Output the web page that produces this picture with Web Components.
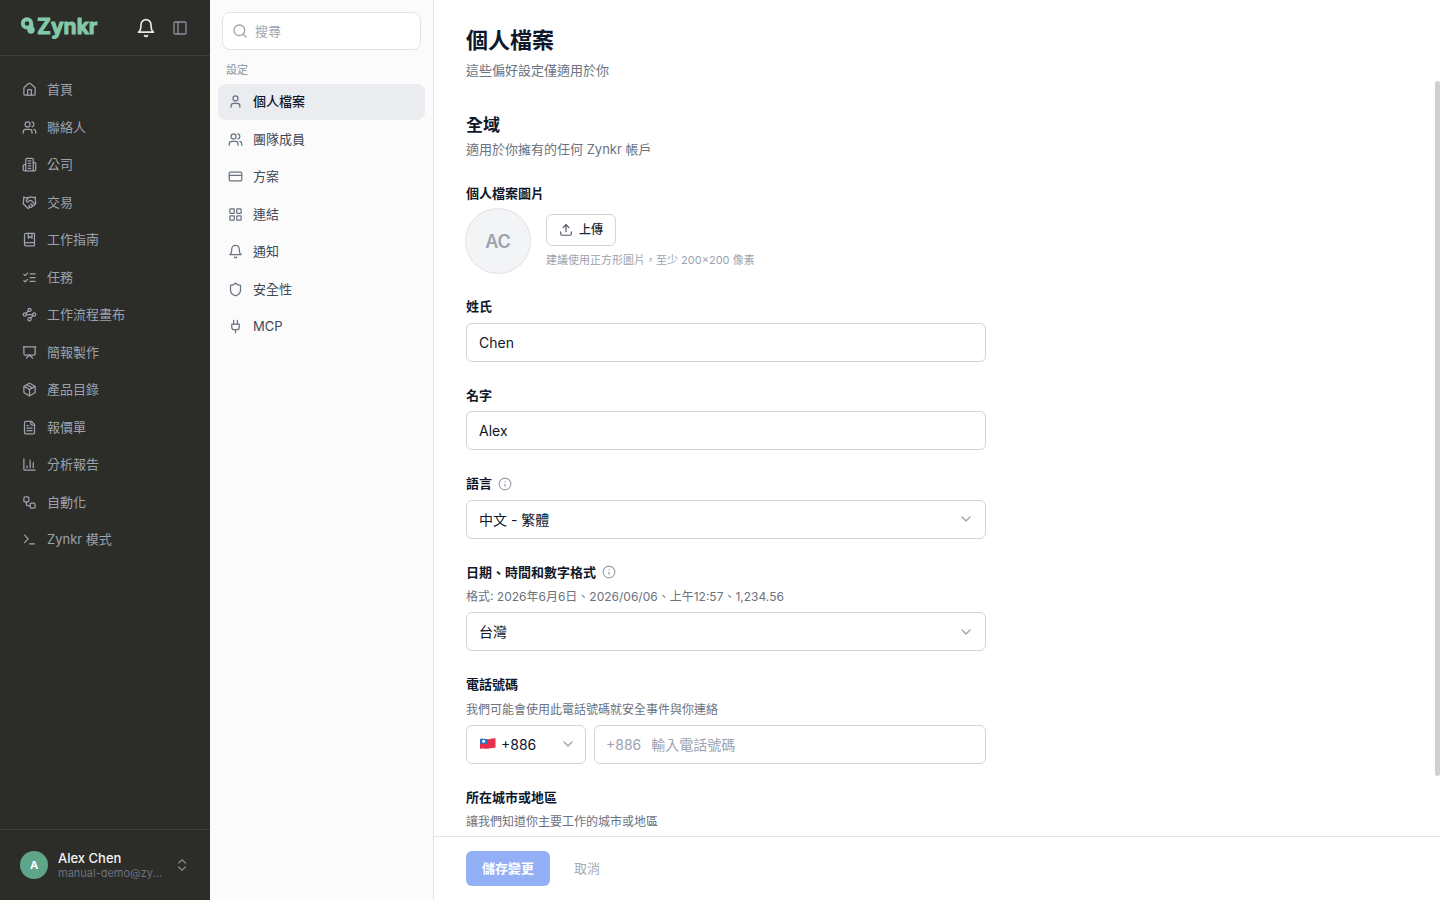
<!DOCTYPE html>
<html lang="zh-Hant">
<head>
<meta charset="utf-8">
<meta name="viewport" content="width=device-width, initial-scale=1">
<title>Zynkr</title>
<style>
html, body {
  height: 100%;
  margin: 0;
}
body {
  font-family: Inter, "Noto Sans CJK TC", sans-serif;
  font-size: 13px;
  line-height: 1.5;
  color: #0f172a;
  background: #fff;
  --ink: #0f172a;
  --muted: #6b7280;
  --faint: #9ca3af;
  --line: #e2e3e7;
  --field-line: #d0d2dc;
}
</style>
</head>
<body>
<app-shell>
  <main-sidebar slot="sidebar">
    <nav-item icon="home">首頁</nav-item>
    <nav-item icon="users">聯絡人</nav-item>
    <nav-item icon="building">公司</nav-item>
    <nav-item icon="handshake">交易</nav-item>
    <nav-item icon="book">工作指南</nav-item>
    <nav-item icon="checks">任務</nav-item>
    <nav-item icon="waypoints">工作流程畫布</nav-item>
    <nav-item icon="presentation">簡報製作</nav-item>
    <nav-item icon="package">產品目錄</nav-item>
    <nav-item icon="file">報價單</nav-item>
    <nav-item icon="chart">分析報告</nav-item>
    <nav-item icon="workflow">自動化</nav-item>
    <nav-item icon="terminal">Zynkr 模式</nav-item>
    <user-menu slot="user" name="Alex Chen" email="manual-demo@zy..."></user-menu>
  </main-sidebar>

  <settings-sidebar slot="settings" heading="設定">
    <nav-item icon="user" active>個人檔案</nav-item>
    <nav-item icon="users">團隊成員</nav-item>
    <nav-item icon="card">方案</nav-item>
    <nav-item icon="grid">連結</nav-item>
    <nav-item icon="bell">通知</nav-item>
    <nav-item icon="shield">安全性</nav-item>
    <nav-item icon="plug">MCP</nav-item>
  </settings-sidebar>

  <settings-page heading="個人檔案" subtitle="這些偏好設定僅適用於你">
    <form-section heading="全域" subtitle="適用於你擁有的任何 Zynkr 帳戶">
      <avatar-field label="個人檔案圖片" initials="AC" hint="建議使用正方形圖片，至少 200×200 像素">上傳</avatar-field>
      <text-field label="姓氏" value="Chen"></text-field>
      <text-field label="名字" value="Alex"></text-field>
      <select-field label="語言" info="語言說明" options="中文 - 繁體"></select-field>
      <select-field label="日期、時間和數字格式" info="格式說明" options="台灣"
        hint="格式: 2026年6月6日、2026/06/06、上午12:57、1,234.56"></select-field>
      <phone-field label="電話號碼" hint="我們可能會使用此電話號碼就安全事件與你連絡" code="+886" placeholder="輸入電話號碼"></phone-field>
      <text-field label="所在城市或地區" hint="讓我們知道你主要工作的城市或地區"></text-field>
    </form-section>
    <save-bar slot="footer" save="儲存變更" cancel="取消"></save-bar>
  </settings-page>
</app-shell>

<script>
var icons = {
  home: `<path d="M15 21v-8a1 1 0 0 0-1-1h-4a1 1 0 0 0-1 1v8"/><path d="M3 10a2 2 0 0 1 .709-1.528l7-5.999a2 2 0 0 1 2.582 0l7 5.999A2 2 0 0 1 21 10v9a2 2 0 0 1-2 2H5a2 2 0 0 1-2-2z"/>`,
  user: `<path d="M19 21v-2a4 4 0 0 0-4-4H9a4 4 0 0 0-4 4v2"/><circle cx="12" cy="7" r="4"/>`,
  users: `<path d="M16 21v-2a4 4 0 0 0-4-4H6a4 4 0 0 0-4 4v2"/><circle cx="9" cy="7" r="4"/><path d="M22 21v-2a4 4 0 0 0-3-3.87"/><path d="M16 3.13a4 4 0 0 1 0 7.75"/>`,
  building: `<path d="M6 22V4a2 2 0 0 1 2-2h8a2 2 0 0 1 2 2v18Z"/><path d="M6 12H4a2 2 0 0 0-2 2v6a2 2 0 0 0 2 2h2"/><path d="M18 9h2a2 2 0 0 1 2 2v9a2 2 0 0 1-2 2h-2"/><path d="M10 6h4M10 10h4M10 14h4M10 18h4"/>`,
  handshake: `<path d="m11 17 2 2a1 1 0 1 0 3-3"/><path d="m14 14 2.5 2.5a1 1 0 1 0 3-3l-3.88-3.88a3 3 0 0 0-4.24 0l-.88.88a1 1 0 1 1-3-3l2.81-2.81a5.79 5.79 0 0 1 7.06-.87l.47.28a2 2 0 0 0 1.42.25L21 4"/><path d="m21 3 1 11h-2"/><path d="M3 3 2 14l6.5 6.5a1 1 0 1 0 3-3"/><path d="M3 4h8"/>`,
  book: `<path d="M10 2v8l3-3 3 3V2"/><path d="M4 19.5v-15A2.5 2.5 0 0 1 6.5 2H19a1 1 0 0 1 1 1v18a1 1 0 0 1-1 1H6.5a1 1 0 0 1 0-5H20"/>`,
  checks: `<path d="m3 17 2 2 4-4"/><path d="m3 7 2 2 4-4"/><path d="M13 6h8M13 12h8M13 18h8"/>`,
  waypoints: `<circle cx="12" cy="4.5" r="2.5"/><path d="m10.2 6.3-3.9 3.9"/><circle cx="4.5" cy="12" r="2.5"/><path d="M7 12h10"/><circle cx="19.5" cy="12" r="2.5"/><path d="m13.8 17.7 3.9-3.9"/><circle cx="12" cy="19.5" r="2.5"/>`,
  presentation: `<path d="M2 3h20"/><path d="M21 3v11a2 2 0 0 1-2 2H5a2 2 0 0 1-2-2V3"/><path d="m7 21 5-5 5 5"/>`,
  package: `<path d="M11 21.73a2 2 0 0 0 2 0l7-4A2 2 0 0 0 21 16V8a2 2 0 0 0-1-1.73l-7-4a2 2 0 0 0-2 0l-7 4A2 2 0 0 0 3 8v8a2 2 0 0 0 1 1.73z"/><path d="M12 22V12"/><path d="M3.29 7 12 12l8.71-5"/><path d="m7.5 4.27 9 5.15"/>`,
  file: `<path d="M15 2H6a2 2 0 0 0-2 2v16a2 2 0 0 0 2 2h12a2 2 0 0 0 2-2V7Z"/><path d="M14 2v4a2 2 0 0 0 2 2h4"/><path d="M10 9H8M16 13H8M16 17H8"/>`,
  chart: `<path d="M3 3v16a2 2 0 0 0 2 2h16"/><path d="M18 17V9M13 17V5M8 17v-3"/>`,
  workflow: `<rect x="3" y="3" width="8" height="8" rx="2"/><path d="M7 11v4a2 2 0 0 0 2 2h4"/><rect x="13" y="13" width="8" height="8" rx="2"/>`,
  terminal: `<path d="m4 17 6-6-6-6"/><path d="M12 19h8"/>`,
  bell: `<path d="M6 8a6 6 0 0 1 12 0c0 7 3 9 3 9H3s3-2 3-9"/><path d="M10.3 21a1.94 1.94 0 0 0 3.4 0"/>`,
  panel: `<rect x="3" y="3" width="18" height="18" rx="2"/><path d="M9 3v18"/>`,
  search: `<circle cx="11" cy="11" r="8"/><path d="m21 21-4.3-4.3"/>`,
  card: `<rect x="2" y="5" width="20" height="14" rx="2"/><path d="M2 10h20"/>`,
  grid: `<rect x="3" y="3" width="7" height="7" rx="1"/><rect x="14" y="3" width="7" height="7" rx="1"/><rect x="14" y="14" width="7" height="7" rx="1"/><rect x="3" y="14" width="7" height="7" rx="1"/>`,
  shield: `<path d="M20 13c0 5-3.5 7.5-7.66 8.95a1 1 0 0 1-.67-.01C7.5 20.5 4 18 4 13V6a1 1 0 0 1 1-1c2 0 4.5-1.2 6.24-2.72a1.17 1.17 0 0 1 1.52 0C14.51 3.81 17 5 19 5a1 1 0 0 1 1 1z"/>`,
  plug: `<path d="M12 22v-5M9 8V2M15 8V2"/><path d="M18 8v5a4 4 0 0 1-4 4h-4a4 4 0 0 1-4-4V8Z"/>`,
  upload: `<path d="M21 15v4a2 2 0 0 1-2 2H5a2 2 0 0 1-2-2v-4"/><path d="m17 8-5-5-5 5"/><path d="M12 3v12"/>`,
  info: `<circle cx="12" cy="12" r="10"/><path d="M12 16v-4M12 8h.01"/>`,
  down: `<path d="m6 9 6 6 6-6"/>`,
  updown: `<path d="m7 15 5 5 5-5"/><path d="m7 9 5-5 5 5"/>`,
};

// shared by every component that draws a form control
var field_css = `
:host { display: block; }
.head { display: flex; align-items: center; gap: 6px; }
label, .label { font-weight: 600; color: var(--ink); }
.hint { margin: 6px 0 0; font-size: 12px; color: var(--muted); }
.box { position: relative; margin-top: 6px; }
input, select {
  display: block;
  box-sizing: border-box;
  width: 100%;
  padding: 8px 12px;
  border: 1px solid var(--field-line);
  border-radius: 6px;
  background: #fff;
  color: var(--ink);
  font: inherit;
  font-size: 14px;
  line-height: 21px;
}
select { appearance: none; padding-right: 36px; }
input:focus, select:focus { outline: 2px solid #93b0f6; }
input::placeholder { color: var(--faint); opacity: 1; }
.arrow {
  position: absolute;
  right: 12px;
  top: 0;
  bottom: 0;
  display: flex;
  align-items: center;
  color: var(--faint);
  pointer-events: none;
}
.info {
  display: flex;
  padding: 0;
  border: 0;
  background: none;
  color: var(--faint);
}`;

class BaseElement extends HTMLElement {
  constructor() {
    super();
    this.attachShadow({ mode: 'open' });
  }

  connectedCallback() {
    this.shadowRoot.innerHTML = `<style>${this.css}</style>${this.html}`;
  }

  attr(name) {
    return this.getAttribute(name) ?? '';
  }

  get css() { return field_css; }
  get html() { return `<slot></slot>`; }

  get head() {
    let info = this.attr('info');
    return `<div class="head"><label for="control">${this.attr('label')}</label>${
      info ? `<button class="info" type="button" aria-label="${info}"><line-icon name="info" size="14"></line-icon></button>` : ''
    }</div>${this.hasAttribute('hint') ? `<p class="hint">${this.attr('hint')}</p>` : ''}`;
  }
}

class LineIcon extends BaseElement {
  get css() {
    return `:host { display: block; flex: none; } svg { display: block; }`;
  }
  get html() {
    let size = this.attr('size') || 15;
    return `<svg width="${size}" height="${size}" viewBox="0 0 24 24" fill="none" stroke="currentColor"
      stroke-width="2" stroke-linecap="round" stroke-linejoin="round" aria-hidden="true">${icons[this.attr('name')]}</svg>`;
  }
}

class AppShell extends BaseElement {
  get css() {
    return `
:host { display: grid; grid-template-columns: 210px 224px minmax(0, 1fr); height: 100vh; }
::slotted(*) { min-height: 0; min-width: 0; }`;
  }
  get html() {
    return `<slot name="sidebar"></slot><slot name="settings"></slot><slot></slot>`;
  }
}

class BrandLogo extends BaseElement {
  get css() {
    return `
:host { display: block; }
a { display: block; color: #82c9a9; }
svg { display: block; overflow: visible; }
text {
  font-family: Inter, sans-serif;
  font-size: 21px;
  font-weight: 700;
  fill: currentColor;
  stroke: currentColor;
  stroke-width: 1px;
  stroke-linejoin: round;
}`;
  }
  get html() {
    return `<a href="#" aria-label="Zynkr">
  <svg width="78" height="28" viewBox="0 0 78 28" fill="none" stroke="currentColor" stroke-linecap="round">
    <circle cx="7" cy="9.4" r="4.2" stroke-width="3.9"/>
    <path d="M11.7 10v6" stroke-width="3.2"/>
    <circle cx="11" cy="16" r="3.7" fill="currentColor" stroke="none"/>
    <text x="17" y="20">Zynkr</text>
  </svg></a>`;
  }
}

class MainSidebar extends BaseElement {
  get css() {
    return `
:host {
  display: flex;
  flex-direction: column;
  background: #2c2c28;
  --item-color: #9ca3af;
  --item-icon: #9ca3af;
}
header {
  display: flex;
  align-items: center;
  justify-content: space-between;
  height: 55px;
  padding: 0 14px 0 20px;
  border-bottom: 1px solid #3d3f3b;
}
.tools { display: flex; gap: 2px; }
button {
  display: grid;
  place-items: center;
  width: 32px;
  height: 32px;
  padding: 0;
  border: 0;
  background: none;
  color: #8b909b;
}
button.bell { color: #e5e7eb; }
nav {
  display: flex;
  flex-direction: column;
  flex: 1;
  gap: 2px;
  min-height: 0;
  padding: 16px 12px;
}
footer { border-top: 1px solid #3d3f3b; }`;
  }
  get html() {
    return `<header>
  <brand-logo></brand-logo>
  <div class="tools">
    <button class="bell" type="button" aria-label="通知"><line-icon name="bell" size="20"></line-icon></button>
    <button type="button" aria-label="收合側邊欄"><line-icon name="panel" size="16"></line-icon></button>
  </div>
</header>
<nav><slot></slot></nav>
<footer><slot name="user"></slot></footer>`;
  }
}

class NavItem extends BaseElement {
  get css() {
    return `
:host { display: block; }
a {
  display: flex;
  align-items: center;
  gap: 10px;
  padding: 8px 10px;
  border-radius: 8px;
  color: var(--item-color);
  text-decoration: none;
}
line-icon { color: var(--item-icon); }
:host([active]) a { background: #ebecf0; color: var(--ink); font-weight: 500; }`;
  }
  get html() {
    return `<a href="#"><line-icon name="${this.attr('icon')}"></line-icon><span><slot></slot></span></a>`;
  }
}

class UserMenu extends BaseElement {
  get css() {
    return `
:host { display: block; }
button {
  display: flex;
  align-items: center;
  gap: 10px;
  width: 100%;
  height: 70px;
  padding: 0 20px;
  border: 0;
  background: none;
  font: inherit;
  text-align: left;
  color: #6b7280;
}
.avatar {
  display: grid;
  place-items: center;
  flex: none;
  width: 28px;
  height: 28px;
  border-radius: 50%;
  background: #5fa58a;
  color: #fff;
  font-size: 11px;
  font-weight: 700;
}
.who { flex: 1; min-width: 0; }
.name, .email { display: block; white-space: nowrap; }
.name { font-weight: 500; line-height: 16px; color: #f3f4f6; }
.email { font-size: 11px; line-height: 14px; }
line-icon { color: #7d828c; }`;
  }
  get html() {
    let name = this.attr('name');
    return `<button type="button">
  <span class="avatar">${name[0]}</span>
  <span class="who"><span class="name">${name}</span><span class="email">${this.attr('email')}</span></span>
  <line-icon name="updown" size="16"></line-icon>
</button>`;
  }
}

class SettingsSidebar extends BaseElement {
  get css() {
    return `
:host {
  display: block;
  border-right: 1px solid var(--line);
  background: #fbfbfb;
  --item-color: #3f4857;
  --item-icon: #6b7280;
}
.search {
  display: flex;
  align-items: center;
  gap: 7px;
  margin: 12px 12px 0;
  padding: 8px 9px;
  border: 1px solid var(--line);
  border-radius: 8px;
  background: #fff;
  color: var(--faint);
}
input {
  flex: 1;
  min-width: 0;
  height: 1.5em;
  padding: 0;
  border: 0;
  outline: 0;
  background: none;
  color: var(--ink);
  font: inherit;
}
input::placeholder { color: var(--faint); opacity: 1; }
h2 {
  margin: 12px 16px 6px;
  font-size: 11px;
  font-weight: 500;
  color: var(--faint);
}
nav { display: flex; flex-direction: column; gap: 2px; padding: 0 8px; }`;
  }
  get html() {
    return `<label class="search"><line-icon name="search" size="16"></line-icon><input type="search" placeholder="搜尋" aria-label="搜尋"></label>
<h2>${this.attr('heading')}</h2>
<nav><slot></slot></nav>`;
  }
}

class SettingsPage extends BaseElement {
  get css() {
    return `
:host { position: relative; display: flex; flex-direction: column; }
main {
  flex: 1;
  min-height: 0;
  overflow: auto;
  scrollbar-width: none;
  padding: 24px 32px;
}
h1 { margin: 0; font-size: 22px; font-weight: 600; color: var(--ink); }
p { margin: 4px 0 32px; color: var(--muted); }
.thumb {
  position: absolute;
  top: 9%;
  right: 0;
  bottom: 124px;
  width: 5px;
  border-radius: 3px;
  background: #cfcfcf;
}`;
  }
  get html() {
    return `<main>
  <h1>${this.attr('heading')}</h1>
  <p>${this.attr('subtitle')}</p>
  <slot></slot>
</main>
<div class="thumb"></div>
<slot name="footer"></slot>`;
  }
}

class FormSection extends BaseElement {
  get css() {
    return `
:host { display: block; max-width: 520px; }
h2 { margin: 0; font-size: 17px; font-weight: 600; color: var(--ink); }
p { margin: 2px 0 24px; color: var(--muted); }
.fields { display: grid; gap: 24px; }`;
  }
  get html() {
    return `<h2>${this.attr('heading')}</h2>
<p>${this.attr('subtitle')}</p>
<div class="fields"><slot></slot></div>`;
  }
}

class AvatarField extends BaseElement {
  get css() {
    return `${field_css}
.row { display: flex; align-items: center; gap: 16px; margin-top: 6px; }
.avatar {
  display: grid;
  place-items: center;
  width: 64px;
  height: 64px;
  border-radius: 50%;
  background: #f3f4f6;
  box-shadow: 0 0 0 1px #e2e3e7;
  color: var(--faint);
  font-size: 18px;
  font-weight: 600;
}
.upload {
  display: flex;
  align-items: center;
  gap: 6px;
  height: 32px;
  padding: 0 12px;
  border: 1px solid var(--field-line);
  border-radius: 6px;
  background: #fff;
  color: #1f2937;
  font: inherit;
  font-size: 12px;
  font-weight: 500;
}
.upload line-icon { color: #4b5563; }
.note { margin: 6px 0 0; font-size: 11px; color: var(--faint); }`;
  }
  get html() {
    return `<div class="label">${this.attr('label')}</div>
<div class="row">
  <div class="avatar">${this.attr('initials')}</div>
  <div>
    <button class="upload" type="button"><line-icon name="upload" size="14"></line-icon><span><slot></slot></span></button>
    <p class="note">${this.attr('hint')}</p>
  </div>
</div>`;
  }
}

class TextField extends BaseElement {
  get html() {
    return `${this.head}<div class="box"><input id="control" type="text" value="${this.attr('value')}"></div>`;
  }
}

class SelectField extends BaseElement {
  get html() {
    let options = this.attr('options').split('|').map(o => `<option>${o}</option>`).join('');
    return `${this.head}<div class="box"><select id="control">${options}</select><span class="arrow"><line-icon name="down" size="16"></line-icon></span></div>`;
  }
}

class PhoneField extends BaseElement {
  get css() {
    return `${field_css}
.row { display: flex; gap: 8px; }
.code { flex: 0 0 120px; }
.code select { padding-left: 34px; }
.code .arrow { right: 10px; }
.flag {
  position: absolute;
  left: 13px;
  top: 0;
  bottom: 0;
  display: flex;
  align-items: center;
  pointer-events: none;
}
.number {
  display: flex;
  align-items: center;
  gap: 10px;
  flex: 1;
  box-sizing: border-box;
  padding: 8px 11px;
  border: 1px solid var(--field-line);
  border-radius: 6px;
  font-size: 14px;
  line-height: 21px;
  color: var(--faint);
}
.number input { flex: 1; min-width: 0; padding: 0; border: 0; outline: 0; }`;
  }
  get html() {
    let code = this.attr('code');
    return `${this.head}<div class="row">
  <div class="box code">
    <select aria-label="國碼"><option>${code}</option></select>
    <span class="flag"><svg width="17" height="14" viewBox="0 0 17 14" aria-hidden="true">
      <path d="M1 2c3-.9 5 .2 7.500 .2S13.500.8 16.500 1.200v9.600c-3-.4-5.500.9-8 .9S4 10.900 1 11.900z" fill="#e8304c"/>
      <path d="M1 2c3-.9 5 .2 7.500 .2v4.900C6 7.100 4 6.100 1 7z" fill="#1d74c9"/>
      <circle cx="4.600" cy="4.300" r="1.500" fill="#fff"/>
    </svg></span>
    <span class="arrow"><line-icon name="down" size="16"></line-icon></span>
  </div>
  <div class="box number"><span>${code}</span><input id="control" type="tel" placeholder="${this.attr('placeholder')}"></div>
</div>`;
  }
}

class SaveBar extends BaseElement {
  get css() {
    return `
:host {
  display: flex;
  gap: 8px;
  padding: 14px 32px;
  border-top: 1px solid var(--line);
  background: #fff;
}
button {
  padding: 8px 16px;
  border: 0;
  border-radius: 6px;
  background: none;
  font: inherit;
  color: #a6abb5;
}
.save { background: #93b0f6; color: #fff; font-weight: 600; }`;
  }
  get html() {
    return `<button class="save" type="submit" disabled>${this.attr('save')}</button><button type="button" disabled>${this.attr('cancel')}</button>`;
  }
}

customElements.define('line-icon', LineIcon);
customElements.define('brand-logo', BrandLogo);
customElements.define('nav-item', NavItem);
customElements.define('user-menu', UserMenu);
customElements.define('main-sidebar', MainSidebar);
customElements.define('settings-sidebar', SettingsSidebar);
customElements.define('avatar-field', AvatarField);
customElements.define('text-field', TextField);
customElements.define('select-field', SelectField);
customElements.define('phone-field', PhoneField);
customElements.define('form-section', FormSection);
customElements.define('save-bar', SaveBar);
customElements.define('settings-page', SettingsPage);
customElements.define('app-shell', AppShell);
</script>
</body>
</html>
